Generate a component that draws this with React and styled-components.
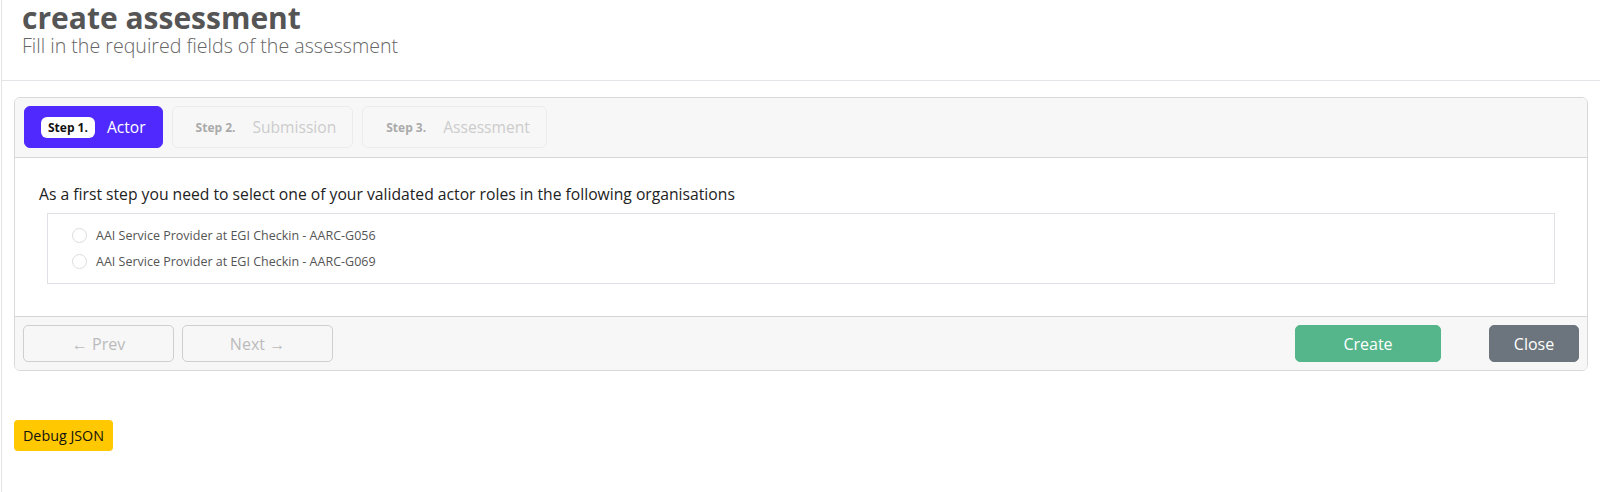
import React, { useState } from "react";
import styled, { createGlobalStyle } from "styled-components";

const GlobalStyle = createGlobalStyle`
  body {
    margin: 0;
    background: #fff;
    font-family: "Open Sans", "Liberation Sans", sans-serif;
  }
  * { box-sizing: border-box; }
`;

const Page = styled.div`
  margin-left: 1px;
  border-left: 1px solid #e4e4e4;
  min-height: 100vh;
`;

const Header = styled.div`
  height: 81px;
  padding: 1px 20px 0;
  border-bottom: 1px solid #e3e3e8;
`;

const Title = styled.h1`
  margin: 0;
  font-size: 30px;
  line-height: 33px;
  font-weight: 700;
  color: #555;
`;

const Subtitle = styled.p`
  margin: 0;
  font-size: 19.6px;
  line-height: 24px;
  font-weight: 300;
  color: #666;
`;

const Content = styled.div`
  padding: 16px 12px 0;
`;

const Card = styled.div`
  border: 1px solid #d9d9d9;
  border-radius: 6px;
  overflow: hidden;
`;

const CardHeader = styled.div`
  display: flex;
  gap: 9px;
  padding: 8px 9px 9px;
  background: #f7f7f7;
  border-bottom: 1px solid #d6d6d6;
`;

const Step = styled.div`
  display: flex;
  align-items: center;
  gap: ${(p) => (p.active ? "12px" : "10px")};
  height: 42px;
  padding: 0 16px;
  border-radius: 6px;
  border: 1px solid ${(p) => (p.active ? "#5029ff" : "#ececec")};
  background: ${(p) => (p.active ? "#5029ff" : "transparent")};
`;

const StepBadge = styled.span`
  padding: 2px 7px;
  border-radius: 6px;
  font-size: 12px;
  font-weight: 700;
  line-height: 17px;
  background: ${(p) => (p.active ? "#fff" : "transparent")};
  color: ${(p) => (p.active ? "#111" : "#aaa")};
`;

const StepLabel = styled.span`
  font-size: 15.6px;
  color: ${(p) => (p.active ? "#fff" : "#ccc")};
`;

const CardBody = styled.div`
  padding: 24px 24px 32px;
`;

const Lead = styled.p`
  margin: 0 0 7px;
  font-size: 15.7px;
  line-height: 24px;
  color: #222;
`;

const OptionBox = styled.div`
  margin: 0 8px;
  padding: 8px 24px 9px;
  border: 1px solid #e0e0e6;
`;

const Option = styled.label`
  display: flex;
  align-items: center;
  gap: 9px;
  height: 26px;
  font-size: 12.5px;
  color: #555;
  cursor: pointer;
`;

const Radio = styled.span`
  width: 15px;
  height: 15px;
  border-radius: 50%;
  border: 1px solid #dcdcdc;
  background: ${(p) => (p.checked ? "#5029ff" : "#fff")};
  box-shadow: ${(p) => (p.checked ? "inset 0 0 0 3px #fff" : "none")};
`;

const CardFooter = styled.div`
  display: flex;
  align-items: center;
  gap: 8px;
  padding: 8px;
  background: #f7f7f7;
  border-top: 1px solid #d6d6d6;
`;

const Button = styled.button`
  height: 37px;
  width: ${(p) => p.w}px;
  border-radius: 5px;
  font-family: inherit;
  font-size: 16px;
  cursor: pointer;
  border: 1px solid ${(p) => p.border || p.bg || "transparent"};
  background: ${(p) => p.bg || "transparent"};
  color: ${(p) => p.color || "#fff"};
  margin-left: ${(p) => p.ml || "0"};
`;

const DebugButton = styled.button`
  display: block;
  margin-top: 49px;
  height: 31px;
  padding: 0 9px;
  border: none;
  border-radius: 4px;
  background: #ffc800;
  color: #111;
  font-family: inherit;
  font-size: 14.3px;
  cursor: pointer;
`;

const roles = [
  "AAI Service Provider at EGI Checkin - AARC-G056",
  "AAI Service Provider at EGI Checkin - AARC-G069",
];

const steps = [
  { n: "Step 1.", label: "Actor" },
  { n: "Step 2.", label: "Submission" },
  { n: "Step 3.", label: "Assessment" },
];

export default function App() {
  const [selected, setSelected] = useState(null);
  return (
    <Page>
      <GlobalStyle />
      <Header>
        <Title>create assessment</Title>
        <Subtitle>Fill in the required fields of the assessment</Subtitle>
      </Header>
      <Content>
        <Card>
          <CardHeader>
            {steps.map((s, i) => (
              <Step key={s.n} active={i === 0}>
                <StepBadge active={i === 0}>{s.n}</StepBadge>
                <StepLabel active={i === 0}>{s.label}</StepLabel>
              </Step>
            ))}
          </CardHeader>
          <CardBody>
            <Lead>
              As a first step you need to select one of your validated actor
              roles in the following organisations
            </Lead>
            <OptionBox>
              {roles.map((r, i) => (
                <Option key={r} onClick={() => setSelected(i)}>
                  <Radio checked={selected === i} />
                  {r}
                </Option>
              ))}
            </OptionBox>
          </CardBody>
          <CardFooter>
            <Button w={151} border="#cfcfcf" color="#bbb">
              ← Prev
            </Button>
            <Button w={151} border="#cfcfcf" color="#bbb">
              Next →
            </Button>
            <Button w={146} bg="#55b68b" ml="auto">
              Create
            </Button>
            <Button w={90} bg="#6c757d" ml="40px">
              Close
            </Button>
          </CardFooter>
        </Card>
        <DebugButton>Debug JSON</DebugButton>
      </Content>
    </Page>
  );
}
